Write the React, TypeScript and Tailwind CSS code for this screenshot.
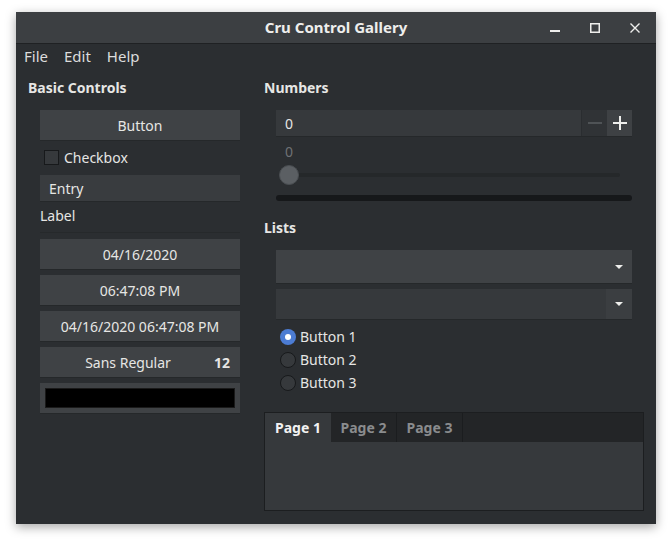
import React from "react";

function PushButton({ children }: { children: React.ReactNode }) {
  return (
    <div className="flex h-[30px] items-center justify-center bg-[#3f4245] shadow-[0_1px_0_#25282a] text-[#e6e6e4]">
      {children}
    </div>
  );
}

function Radio({ label, checked }: { label: string; checked?: boolean }) {
  return (
    <div className="flex h-[23px] items-center pl-[4px]">
      {checked ? (
        <div className="flex h-[16px] w-[16px] items-center justify-center rounded-full bg-[#4c7cd3]">
          <div className="h-[6px] w-[6px] rounded-full bg-white" />
        </div>
      ) : (
        <div className="h-[16px] w-[16px] rounded-full border border-[#17191b] bg-[#36393c]" />
      )}
      <span className="ml-[4px]">{label}</span>
    </div>
  );
}

function Arrow() {
  return (
    <svg width="10" height="6" viewBox="0 0 10 6">
      <path d="M1 1h8L5 5z" fill="#eeeeec" />
    </svg>
  );
}

export default function App() {
  return (
    <div
      className="min-h-[544px] w-[672px] bg-white pl-[16px] pt-[12px] text-[14px] text-[#e6e6e4]"
      style={{ fontFamily: '"Noto Sans", "Open Sans", sans-serif' }}
    >
      <div className="flex h-[512px] w-[640px] flex-col bg-[#2b2e31] shadow-[0_3px_10px_rgba(0,0,0,0.35)]">
        {/* title bar */}
        <div className="relative flex h-[32px] items-center justify-center border-b border-[#1f2123] bg-[#3c3f42]">
          <span className="text-[15px] font-bold text-[#eeeeec]">Cru Control Gallery</span>
          <div className="absolute right-[16px] top-0 flex h-[31px] items-center gap-[30px]">
            <svg width="10" height="10" viewBox="0 0 10 10">
              <rect x="0" y="7" width="10" height="2" fill="#eeeeec" />
            </svg>
            <svg width="10" height="10" viewBox="0 0 10 10">
              <rect x="0.75" y="0.75" width="8.5" height="8.5" fill="none" stroke="#eeeeec" strokeWidth="1.5" />
            </svg>
            <svg width="10" height="10" viewBox="0 0 10 10">
              <path d="M0.5 0.5l9 9M9.5 0.5l-9 9" stroke="#eeeeec" strokeWidth="1.4" />
            </svg>
          </div>
        </div>

        {/* menu bar */}
        <div className="flex h-[24px] items-center gap-[16px] pl-[8px] text-[15px] text-[#dcdcdc]">
          <span>File</span>
          <span>Edit</span>
          <span>Help</span>
        </div>

        <div className="flex flex-1">
          {/* left column */}
          <div className="flex w-[236px] flex-col pl-[12px]">
            <div className="mt-[10px] h-[20px] font-bold leading-[20px]">Basic Controls</div>
            <div className="ml-[12px] mt-[12px] flex w-[200px] flex-col">
              <PushButton>Button</PushButton>
              <div className="mt-[7px] flex h-[20px] items-center pl-[4px]">
                <div className="h-[15px] w-[15px] border border-[#17191b] bg-[#36393c]" />
                <span className="ml-[5px]">Checkbox</span>
              </div>
              <div className="mt-[8px] flex h-[26px] items-center bg-[#393c3f] pl-[9px] shadow-[0_1px_0_#25282a]">
                Entry
              </div>
              <div className="mt-[5px] h-[20px] leading-[20px]">Label</div>
              <div className="mt-[6px] h-px bg-[#26292b]" />
              <div className="mt-[6px] flex flex-col gap-[6px]">
                <PushButton>04/16/2020</PushButton>
                <PushButton>06:47:08 PM</PushButton>
                <PushButton>04/16/2020 06:47:08 PM</PushButton>
                <div className="flex h-[30px] items-center bg-[#3f4245] pr-[10px] shadow-[0_1px_0_#25282a]">
                  <span className="flex-1 pl-[2px] text-center">Sans Regular</span>
                  <span className="font-bold">12</span>
                </div>
                <div className="flex h-[30px] items-center bg-[#3f4245] px-[5px] shadow-[0_1px_0_#25282a]">
                  <div className="h-[20px] flex-1 border border-[#1a1a1a] bg-black" />
                </div>
              </div>
            </div>
          </div>

          {/* right column */}
          <div className="flex flex-1 flex-col pl-[12px]">
            <div className="mt-[10px] h-[20px] font-bold leading-[20px]">Numbers</div>
            <div className="ml-[12px] mt-[12px] flex w-[356px] flex-col">
              <div className="flex h-[26px] items-stretch bg-[#36393c] shadow-[0_1px_0_#25282a]">
                <span className="flex flex-1 items-center pl-[9px]">0</span>
                <div className="flex w-[26px] items-center justify-center border-l border-[#2a2d30] bg-[#303336]">
                  <div className="h-[2px] w-[14px] bg-[#4f5356]" />
                </div>
                <div className="flex w-[25px] items-center justify-center bg-[#3e4144]">
                  <svg width="14" height="14" viewBox="0 0 14 14">
                    <path d="M7 0v14M0 7h14" stroke="#eeeeec" strokeWidth="2" />
                  </svg>
                </div>
              </div>
              <div className="mt-[6px] h-[20px] pl-[9px] leading-[20px] text-[#6f7275]">0</div>
              <div className="relative mt-[3px] flex h-[20px] items-center pl-[4px] pr-[12px]">
                <div className="h-[4px] flex-1 rounded-full bg-[#25282a]" />
                <div className="absolute left-[3px] top-0 h-[20px] w-[20px] rounded-full border border-[#4a4e52] bg-[#5b5f63]" />
              </div>
              <div className="mt-[10px] h-[6px] rounded-full bg-[#16181a]" />
            </div>

            <div className="mt-[17px] h-[20px] font-bold leading-[20px]">Lists</div>
            <div className="ml-[12px] mt-[12px] flex w-[356px] flex-col">
              <div className="flex h-[33px] items-center justify-end bg-[#3f4245] pr-[8px] shadow-[0_1px_0_#25282a]">
                <Arrow />
              </div>
              <div className="mt-[6px] flex h-[30px] bg-[#36393c] shadow-[0_1px_0_#25282a]">
                <div className="flex-1" />
                <div className="flex w-[26px] items-center justify-center bg-[#3b3e41]">
                  <Arrow />
                </div>
              </div>
              <div className="mt-[6px] flex flex-col">
                <Radio label="Button 1" checked />
                <Radio label="Button 2" />
                <Radio label="Button 3" />
              </div>
            </div>

            <div className="mt-[18px] flex h-[99px] w-[380px] flex-col border border-[#1c1e20] bg-[#36393c]">
              <div className="flex h-[29px] bg-[#232527] font-bold">
                <div className="flex w-[66px] items-center justify-center bg-[#36393c] text-[#f2f2f2]">Page 1</div>
                <div className="flex w-[66px] items-center justify-center border-r border-[#1b1d1f] text-[#8a8c8e]">Page 2</div>
                <div className="flex w-[66px] items-center justify-center border-r border-[#1b1d1f] text-[#8a8c8e]">Page 3</div>
              </div>
              <div className="flex-1" />
            </div>
          </div>
        </div>
      </div>
    </div>
  );
}
